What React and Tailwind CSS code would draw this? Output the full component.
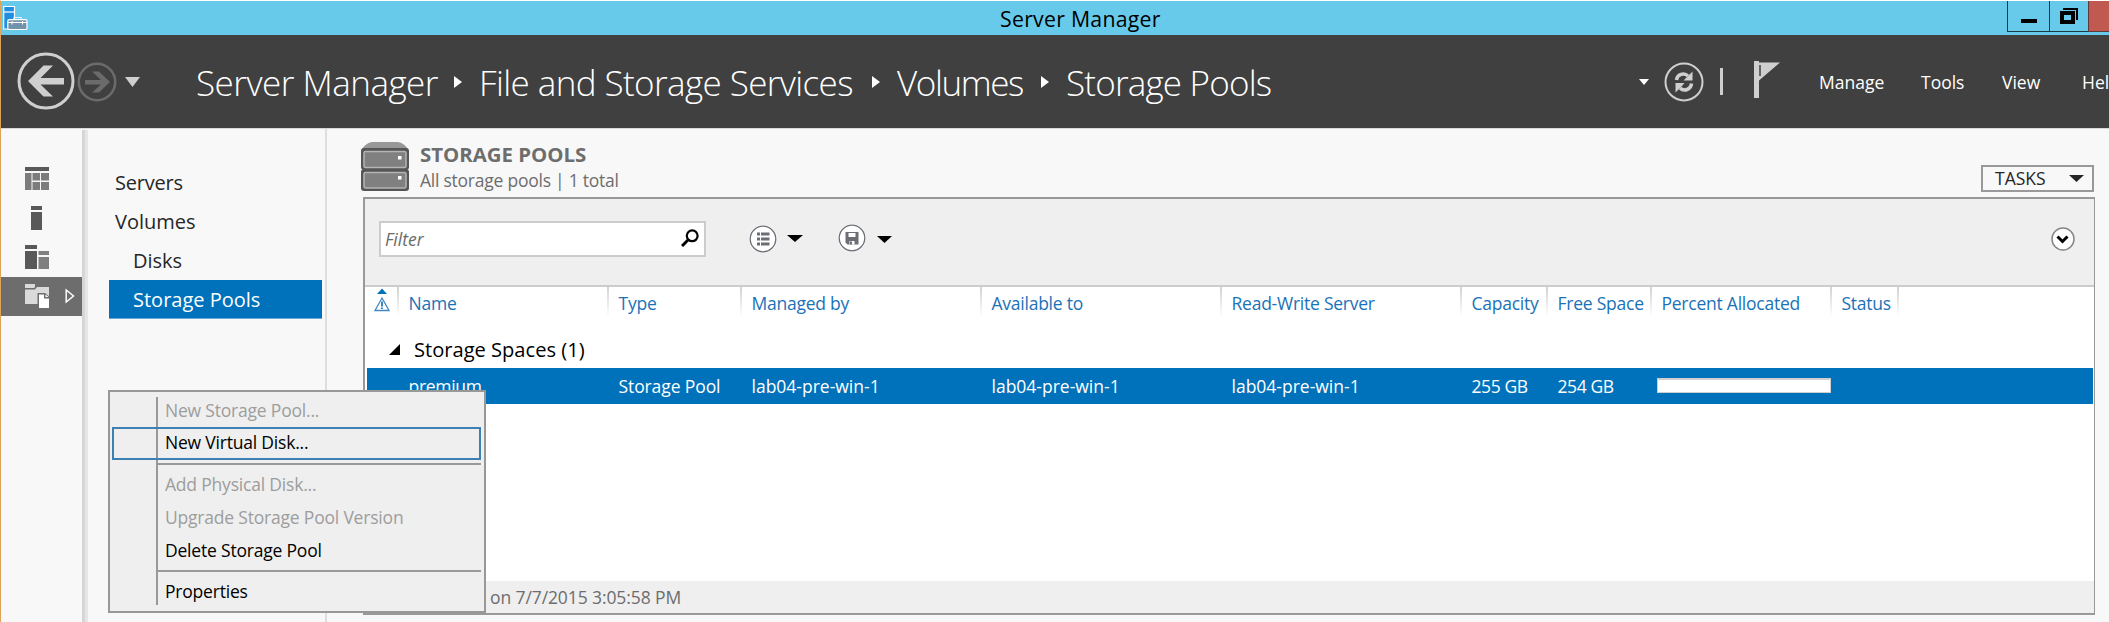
const columns = [
  { label: 'Name', width: 'w-[210px]', value: 'premium', fit: 'tracking-[-0.3px]' },
  { label: 'Type', width: 'w-[133px]', value: 'Storage Pool', fit: 'tracking-[-0.1px]' },
  { label: 'Managed by', width: 'w-[240px]', value: 'lab04-pre-win-1', fit: '' },
  { label: 'Available to', width: 'w-[240px]', value: 'lab04-pre-win-1', fit: '' },
  { label: 'Read-Write Server', width: 'w-[240px]', value: 'lab04-pre-win-1', fit: '' },
  { label: 'Capacity', width: 'w-[86px]', value: '255 GB', fit: 'tracking-[-0.4px]' },
  { label: 'Free Space', width: 'w-[104px]', value: '254 GB', fit: 'tracking-[-0.4px]' },
  { label: 'Percent Allocated', width: 'w-[180px]', value: null },
  { label: 'Status', width: 'w-[67px]', value: '', fit: '' },
];

function Caret({ className }) {
  return (
    <svg viewBox="0 0 16 8" preserveAspectRatio="none" className={className}>
      <path d="M0 0H16L8 8Z" fill="currentColor" />
    </svg>
  );
}

function CrumbArrow() {
  return (
    <svg viewBox="0 0 8 12" className="mb-[3px] h-3 w-2 shrink-0">
      <path d="M0 0L8 6L0 12Z" fill="#fff" />
    </svg>
  );
}

function TitleBar() {
  return (
    <div className="flex h-[34px] shrink-0 items-start bg-[#67caea]">
      <svg viewBox="0 0 25 25" className="mt-[4px] ml-[2px] h-[25px] w-[25px] shrink-0">
        <path d="M.7 1.5H11.5V24H.7Z" fill="#1e8fe0" stroke="#fff" strokeWidth="1.2" />
        <path d="M1 7H11.5" stroke="#fff" strokeWidth="1.2" />
        <path d="M11 14.5V12.5H18V14.5" fill="none" stroke="#e8f4fa" strokeWidth="1.2" />
        <rect x="4.8" y="14.6" width="19.2" height="10" rx="1.5" fill="#7393ad" stroke="#fff" strokeWidth="1.2" />
        <path d="M5 17.5H24M9 16V19.5M19.500 16V19.500" stroke="#fff" />
      </svg>
      <div className="ml-[972px] w-[165px] text-[21.300px] leading-[35px] tracking-[0.25px] text-black">Server Manager</div>
      <div className="ml-auto flex h-[31px]">
        <div className="flex w-[42px] justify-center border-b border-l border-[#1d3a44]">
          <div className="mt-[18px] h-1 w-4 bg-black" />
        </div>
        <div className="w-[39px] border-b border-l border-[#1d3a44]">
          <svg viewBox="0 0 18 16" className="mt-[7px] ml-[10px] h-4 w-[18px]">
            <path d="M3 1H17V12" fill="none" stroke="#000" strokeWidth="2" />
            <rect x="2" y="5" width="11" height="9" fill="none" stroke="#000" strokeWidth="4" />
          </svg>
        </div>
        <div className="w-[21px] border-b border-l border-[#5d3a3c] bg-[#c0594f]" />
      </div>
    </div>
  );
}

function Header() {
  return (
    <div className="flex h-[93px] shrink-0 items-center bg-[#404040] text-white">
      <svg viewBox="0 0 58 58" className="mb-px ml-[16px] h-[58px] w-[58px] shrink-0">
        <circle cx="29" cy="29" r="27" fill="none" stroke="#cfcfcf" strokeWidth="3" />
        <path d="M11 29L26.500 13.500H36L23.500 26H47V32.500H23.500L36 44.500H26.500Z" fill="#cfcfcf" />
      </svg>
      <svg viewBox="0 0 40 40" className="ml-[2px] h-10 w-10 shrink-0">
        <circle cx="20" cy="20" r="18.200" fill="none" stroke="#6b6b6b" strokeWidth="2.500" />
        <path d="M33 20L22 9.500H15L24 18H8V22.500H24L15 30.500H22Z" fill="#6b6b6b" />
      </svg>
      <Caret className="ml-[8px] h-[10px] w-[15px] shrink-0 text-[#cfcfcf]" />
      <div className="ml-[56px] flex items-center pt-[4px] text-[35px] font-light whitespace-nowrap">
        <span className="w-[258px] tracking-[-0.5px]">Server Manager</span>
        <CrumbArrow />
        <span className="ml-[17px] w-[393px] tracking-[-0.6px]">File and Storage Services</span>
        <CrumbArrow />
        <span className="ml-[17px] w-[144px] tracking-[-1.4px]">Volumes</span>
        <CrumbArrow />
        <span className="ml-[17px] tracking-[-0.8px]">Storage Pools</span>
      </div>
      <div className="ml-auto flex w-[470px] shrink-0 items-center">
        <Caret className="h-[6px] w-[10px] shrink-0" />
        <svg viewBox="0 0 40 40" className="ml-[15px] h-10 w-10 shrink-0">
          <circle cx="20" cy="20" r="18.500" fill="none" stroke="#cfcfcf" strokeWidth="2" />
          <path d="M12.500 18C13 12.500 20 10 24 14M27.500 21.500C27 27.500 20 30 16 26" fill="none" stroke="#cfcfcf" strokeWidth="3.500" />
          <path d="M28.500 9.500V18.500H19.500L22.500 15.500ZM11.500 30.500V21H20.500L17.500 24.500Z" fill="#cfcfcf" />
        </svg>
        <div className="ml-[16px] h-[27px] w-[3px] shrink-0 bg-[#cfcfcf]" />
        <svg viewBox="0 0 27 38" className="mb-[5px] ml-[31px] h-[38px] w-[27px] shrink-0">
          <path d="M0 1H5V2.500H26L5 20.500V38H0Z" fill="#cfcfcf" />
          <path d="M6 5V16" stroke="#404040" strokeWidth="1.500" />
        </svg>
        <div className="ml-[38px] flex pt-[1px] text-[17.500px] whitespace-nowrap">
          <span className="w-[102px]">Manage</span>
          <span className="w-[81px]">Tools</span>
          <span className="w-[80px]">View</span>
          <span>Help</span>
        </div>
      </div>
    </div>
  );
}

function IconRail() {
  return (
    <div className="flex w-[81px] shrink-0 flex-col pt-[31px]">
      <div className="flex h-[39px] items-center pb-[2px] pl-[24px]">
        <svg viewBox="0 0 24 24" className="h-6 w-6">
          <path d="M0 0H24V4H0Z" fill="#595959" />
          <path d="M0 6H6.500V23H0ZM7.500 6H15V13.500H7.500ZM16 6H24V13.500H16ZM7.500 15H15V23H7.500ZM16 15H24V23H16Z" fill="#7c7c7c" />
        </svg>
      </div>
      <div className="flex h-[39px] items-center pb-px pl-[30px]">
        <svg viewBox="0 0 11 24" className="h-6 w-[11px]">
          <path d="M0 0H11V4H0ZM0 6H11V24H0Z" fill="#595959" />
        </svg>
      </div>
      <div className="flex h-[39px] items-center pb-px pl-[24px]">
        <svg viewBox="0 0 24 24" className="h-6 w-6">
          <path d="M0 0H12V4H0ZM0 6H12V24H0Z" fill="#595959" />
          <path d="M13.500 6H24V10H13.500ZM13.500 12H24V24H13.500Z" fill="#808080" />
        </svg>
      </div>
      <div className="flex h-[39px] items-center bg-[#6d6d6d] pb-px pl-[24px]">
        <svg viewBox="0 0 24 24" className="h-6 w-6">
          <path d="M0 0H10V3L9 4H0Z" fill="#dadada" />
          <path d="M0 5.500H10L12 3H24V20H0Z" fill="#dadada" />
          <path d="M12.500 9H20L25 13V25H12.500Z" fill="#6d6d6d" />
          <path d="M14 10.500H19V14.500H24V24H14Z" fill="#fff" />
          <path d="M20.500 10.500V13H23.500Z" fill="#fff" />
        </svg>
        <svg viewBox="0 0 10 16" className="ml-[16px] h-4 w-[10px]">
          <path d="M1.200 2L8.500 8L1.200 14Z" fill="none" stroke="#fff" strokeWidth="1.500" />
        </svg>
      </div>
    </div>
  );
}

function Nav() {
  return (
    <div className="flex w-[239px] shrink-0 flex-col border-r-2 border-[#dedede] pt-[35px] pl-[21px] text-[20px] leading-[39px] text-[#262626]">
      <div className="pl-[6px] leading-[38px] tracking-[-0.2px]">Servers</div>
      <div className="pl-[6px]">Volumes</div>
      <div className="pl-[24px]">Disks</div>
      <div className="h-[39px] w-[213px] border-b border-[#66aad7] bg-[#0072bc] pl-[24px] text-white">Storage Pools</div>
    </div>
  );
}

function PoolIcon() {
  return (
    <svg viewBox="0 0 48 49" className="h-[49px] w-12 shrink-0">
      <path d="M1 7Q5 1 11 0H37Q43 1 47 7Z" fill="#989898" />
      <rect x="0" y="6" width="48" height="22" rx="3" fill="#565656" />
      <rect x="0" y="27" width="48" height="22" rx="3" fill="#565656" />
      <rect x="3" y="9.500" width="42" height="16" rx="1.500" fill="#808080" stroke="#b4b4b4" strokeWidth="1.500" />
      <rect x="3" y="30.500" width="42" height="15.500" rx="1.500" fill="#808080" stroke="#b4b4b4" strokeWidth="1.500" />
      <path d="M37 14H40.500V17.500H37ZM37 34H40.500V37.500H37Z" fill="#fff" />
    </svg>
  );
}

function Toolbar() {
  return (
    <div className="flex h-[88px] shrink-0 items-start border-b-2 border-[#cccccc] bg-[#efefef] text-black">
      <div className="mt-[22px] ml-[14px] flex h-[36px] w-[327px] items-center border-2 border-[#cccccc] bg-white pl-[4px]">
        <span className="text-[17.500px] text-[#6a6a6a] italic">Filter</span>
        <svg viewBox="0 0 18 18" className="mr-[5px] mb-[2px] ml-auto h-[18px] w-[18px]">
          <circle cx="11.200" cy="6.800" r="5.400" fill="none" stroke="#000" strokeWidth="2.200" />
          <path d="M7.500 10.500L1 17" stroke="#000" strokeWidth="3" />
        </svg>
      </div>
      <svg viewBox="0 0 28 28" className="mt-[26px] ml-[43px] h-7 w-7">
        <circle cx="14" cy="14" r="14" fill="#fff" />
        <circle cx="14" cy="14" r="12.800" fill="#fff" stroke="#6b6f75" strokeWidth="1.300" />
        <path d="M8 7.500H11V10.500H8ZM8 12.500H11V15.500H8ZM8 17.500H11V20.500H8ZM12 7.500H20.500V10.500H12ZM12 12.500H20.500V15.500H12ZM12 17.500H20.500V20.500H12Z" fill="#6b6f75" />
      </svg>
      <Caret className="mt-[36px] ml-[10px] h-[7px] w-[16px]" />
      <svg viewBox="0 0 28 28" className="mt-[25px] ml-[35px] h-7 w-7">
        <circle cx="14" cy="14" r="14" fill="#fff" />
        <circle cx="14" cy="14" r="12.800" fill="#fff" stroke="#6b6f75" strokeWidth="1.300" />
        <path d="M7.500 8H20.500V20.500H9.500L7.500 18.500Z" fill="#6b6f75" />
        <path d="M10.500 9H17.500V13H10.500ZM11.500 17H16.500V20.500H11.500Z" fill="#fff" />
        <path d="M12 17.500H14V20.500H12Z" fill="#6b6f75" />
      </svg>
      <Caret className="mt-[37px] ml-[11px] h-[7px] w-[15px]" />
      <svg viewBox="0 0 24 24" className="mt-[28px] mr-[19px] ml-auto h-6 w-6">
        <circle cx="12" cy="12" r="11" fill="#fff" stroke="#868686" strokeWidth="1.500" />
        <path d="M6.500 9.500L11.500 14.500L16.500 9.500" fill="none" stroke="#000" strokeWidth="3" />
      </svg>
    </div>
  );
}

function PoolTable() {
  return (
    <div className="flex min-h-0 flex-1 flex-col bg-white pl-[2px] text-[17.500px]">
      <div className="flex h-[35px] shrink-0 text-[#1a72b8]">
        <div className="flex w-[30px] flex-col items-center pt-px">
          <svg viewBox="0 0 16 24" className="h-6 w-4">
            <path d="M3 6L8 .5L13 6Z" fill="#0072bc" />
            <path d="M8 10L15 22.500H1Z" fill="none" stroke="#4388c0" strokeWidth="1.300" />
            <path d="M8 13.500V18.500M8 19.500V21" stroke="#1a72b8" strokeWidth="1.700" />
          </svg>
        </div>
        {columns.map((c) => (
          <div key={c.label} className={`${c.width} flex shrink-0 whitespace-nowrap`}>
            <div className="h-[30px] w-[2px] shrink-0 bg-gradient-to-b from-[#d2d2d2] to-white" />
            <span className="pl-[9.500px] leading-[32px] tracking-[-0.24px]">{c.label}</span>
          </div>
        ))}
        <div className="h-[30px] w-[2px] bg-gradient-to-b from-[#d2d2d2] to-white" />
      </div>
      <div className="flex h-[46px] shrink-0 items-center pt-[12px] pb-[2px] text-[20.100px] text-black">
        <svg viewBox="0 0 11 11" className="mb-[2px] ml-[22px] h-[11px] w-[11px]">
          <path d="M11 0V11H0Z" fill="#000" />
        </svg>
        <span className="ml-[14px]">Storage Spaces (1)</span>
      </div>
      <div className="mr-px flex h-[36px] shrink-0 bg-[#0072bc] pl-[30px] leading-[36px] text-white">
        {columns.map((c) => (
          <div key={c.label} className={`${c.width} shrink-0 whitespace-nowrap`}>
            {c.value === null ? (
              <div className="mt-[10px] ml-[7px] h-[15px] w-[174px] border border-t-2 border-[#cfcfcf] bg-white" />
            ) : (
              <span className={`pl-[11.500px] ${c.fit}`}>{c.value}</span>
            )}
          </div>
        ))}
      </div>
    </div>
  );
}

function MenuItem({ children, disabled }) {
  return (
    <div className={`h-[33px] border-l-2 border-[#999] pl-[7px] leading-[31px] ${disabled ? 'text-[#9d9d9d]' : 'text-black'}`}>
      {children}
    </div>
  );
}

function MenuSeparator({ className }) {
  return (
    <div className={`flex flex-col justify-end border-l-2 border-[#999] ${className}`}>
      <div className="h-[2px] bg-[#999]" />
    </div>
  );
}

function ContextMenu() {
  return (
    <div className="absolute top-[389px] left-[107px] h-[223px] w-[378px] border-2 border-[#989898] bg-[#efefef] pt-[5px] pr-[3px] pl-[46px] text-[17.500px] tracking-[-0.2px] whitespace-nowrap">
      <div className="h-[30px] border-l-2 border-[#999] pl-[7px] leading-[27px] text-[#9d9d9d]">New Storage Pool...</div>
      <div className="relative">
        <MenuItem>New Virtual Disk...</MenuItem>
        <div className="absolute inset-y-0 right-0 -left-[44px] border-2 border-[#3c80b4]" />
      </div>
      <MenuSeparator className="h-[5px]" />
      <div className="h-[4px] border-l-2 border-[#999]" />
      <MenuItem disabled>Add Physical Disk...</MenuItem>
      <MenuItem disabled>Upgrade Storage Pool Version</MenuItem>
      <MenuItem>Delete Storage Pool</MenuItem>
      <MenuSeparator className="h-[4px]" />
      <div className="h-[4px] border-l-2 border-[#999]" />
      <div className="h-[29px] border-l-2 border-[#999] pl-[7px] leading-[31px] text-black">Properties</div>
    </div>
  );
}

export default function App() {
  return (
    <div className="relative flex h-[622px] w-full flex-col overflow-hidden border-t border-l border-t-white border-l-[#e0a458] bg-[#f8f8f8] font-['Open_Sans','Noto_Sans',sans-serif]">
      <TitleBar />
      <Header />
      <div className="flex min-h-0 flex-1 border-t border-[#d8d8d8]">
        <IconRail />
        <div className="mt-px w-[6px] shrink-0 border-r-[3px] border-[#e6e6e6] bg-[#d6d6d6]" />
        <Nav />
        <div className="flex min-w-0 flex-1 flex-col pr-[14px] pb-[7px] pl-[34px]">
          <div className="flex h-[68px] shrink-0 pt-[13px]">
            <PoolIcon />
            <div className="ml-[11px] text-[#6d6d6d]">
              <div className="text-[20.400px] leading-[24px] font-bold">STORAGE POOLS</div>
              <div className="pt-px text-[17.500px] leading-[27px] tracking-[-0.24px]">All storage pools | 1 total</div>
            </div>
            <div className="mt-[23px] mr-px ml-auto flex h-[27px] w-[113px] items-center border-2 border-[#999] pl-[12px] text-[17.500px] text-[#262626]">
              TASKS
              <Caret className="mr-[8px] ml-auto h-[7px] w-[15px]" />
            </div>
          </div>
          <div className="ml-[2px] flex min-h-0 flex-1 flex-col border-2 border-r border-[#999]">
            <Toolbar />
            <PoolTable />
            <div className="h-[32px] shrink-0 bg-[#efefef] pl-[14px] text-[17.500px] leading-[33px] tracking-[-0.1px] text-[#6d6d6d]">
              <span className="pl-[111px]">on 7/7/2015 3:05:58 PM</span>
            </div>
          </div>
        </div>
      </div>
      <ContextMenu />
    </div>
  );
}
